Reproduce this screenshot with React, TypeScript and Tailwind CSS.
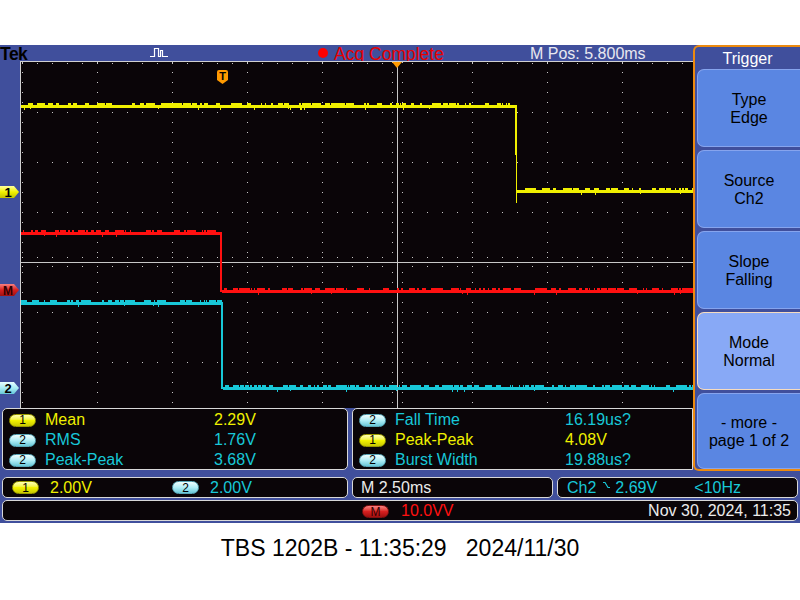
import React from 'react';

const YEL = '#f0f000';
const CYA = '#18c8d8';
const RED = '#ff1010';

// small deterministic noise so the traces look like a real capture
const makeRng = (seed: number) => () => {
  seed = (seed * 1103515245 + 12345) & 0x7fffffff;
  return seed / 0x7fffffff;
};

const Trace = ({ x0, x1, y, color, seed }: { x0: number; x1: number; y: number; color: string; seed: number }) => {
  const r = makeRng(seed);
  const bits: React.ReactNode[] = [<rect key="m" x={x0} y={y - 1} width={x1 - x0} height={3} fill={color} />];
  for (let x = x0; x < x1; x++) {
    const v = r();
    if (v < 0.22) {
      const w = 1 + Math.floor(r() * 5);
      bits.push(<rect key={'a' + x} x={x} y={y - 3} width={w} height={2} fill={color} />);
    } else if (v > 0.975) {
      bits.push(<rect key={'b' + x} x={x} y={y + 2} width={1} height={1 + Math.floor(r() * 2)} fill={color} />);
    }
  }
  return <g>{bits}</g>;
};

const Badge = ({ n, kind }: { n: string; kind: 'y' | 'c' | 'r' }) => {
  const cls = {
    y: 'bg-linear-to-b from-[#ffffb0] via-[#f2f200] to-[#c8c800] border-[#9a9a00] text-black',
    c: 'bg-linear-to-b from-[#f0feff] via-[#b0eef6] to-[#68c8d8] border-[#5aa8b8] text-black',
    r: 'bg-linear-to-b from-[#f88080] via-[#d82020] to-[#a01010] border-[#801010] text-[#300000]',
  }[kind];
  return (
    <span className={`inline-flex items-center justify-center w-[27px] h-[13px] rounded-full border text-[12px] leading-none shrink-0 ${cls}`}>
      {n}
    </span>
  );
};

const Graticule = () => {
  const dots: React.ReactNode[] = [];
  const cols = [22, 97, 172, 247, 322, 472, 547, 622];
  cols.forEach(cx => {
    for (let y = 62; y < 408; y += 10) dots.push(<rect key={`c${cx}-${y}`} x={cx} y={y} width={1} height={1} fill="#c8c8c8" />);
  });
  const rows = [63, 112, 162, 212, 312, 362];
  rows.forEach(ry => {
    for (let x = 22; x < 693; x += 15) dots.push(<rect key={`r${ry}-${x}`} x={x} y={ry} width={1} height={1} fill="#c8c8c8" />);
  });
  for (let x = 22; x < 693; x += 15) {
    dots.push(<rect key={`h1${x}`} x={x} y={257} width={1} height={1} fill="#c8c8c8" />);
    dots.push(<rect key={`h2${x}`} x={x} y={266} width={1} height={1} fill="#c8c8c8" />);
  }
  for (let y = 62; y < 408; y += 10) {
    dots.push(<rect key={`v1${y}`} x={392} y={y} width={1} height={1} fill="#c8c8c8" />);
    dots.push(<rect key={`v2${y}`} x={402} y={y} width={1} height={1} fill="#c8c8c8" />);
  }

  return (
    <svg width={693} height={347} viewBox="0 61 693 347" className="block">
      <rect x={0} y={61} width={20} height={347} fill="#404f9c" />
      <rect x={20} y={61} width={673} height={347} fill="#0a0508" />
      {dots}
      <rect x={20} y={61} width={1} height={347} fill="#d0d0d0" />
      <rect x={20} y={61} width={673} height={1} fill="#d0d0d0" />
      <rect x={397} y={61} width={1} height={347} fill="#c8c8c8" />
      <rect x={20} y={262} width={673} height={1} fill="#c8c8c8" />

      {/* yellow ch1 */}
      <Trace x0={21} x1={516} y={106} color={YEL} seed={7} />
      <rect x={515} y={105} width={2} height={50} fill={YEL} />
      <rect x={516} y={105} width={1} height={98} fill={YEL} />
      <Trace x0={517} x1={693} y={191} color={YEL} seed={11} />

      {/* red math */}
      <Trace x0={21} x1={222} y={233} color={RED} seed={23} />
      <rect x={220} y={232} width={2} height={60} fill={RED} />
      <Trace x0={222} x1={693} y={291} color={RED} seed={31} />

      {/* cyan ch2 */}
      <Trace x0={21} x1={222} y={303} color={CYA} seed={41} />
      <rect x={221} y={302} width={2} height={87} fill={CYA} />
      <Trace x0={223} x1={693} y={388} color={CYA} seed={53} />

      {/* trigger position */}
      <polygon points="392,62 402,62 397,68" fill="#ff9a00" />
      <path d="M217,72 Q217,70 219,70 H226 Q228,70 228,72 V80 L222.5,84 L217,80 Z" fill="#ff9a00" />
      <text x={222.5} y={80} fontSize={11} fontWeight={700} textAnchor="middle" fill="#000" fontFamily="Liberation Sans, Arial, sans-serif">T</text>

      {/* ground markers */}
      <defs>
        <linearGradient id="gy" x1="0" y1="0" x2="0" y2="1">
          <stop offset="0" stopColor="#ffffa0" />
          <stop offset="0.5" stopColor="#f2f200" />
          <stop offset="1" stopColor="#c0c000" />
        </linearGradient>
        <linearGradient id="gr" x1="0" y1="0" x2="0" y2="1">
          <stop offset="0" stopColor="#f88080" />
          <stop offset="0.5" stopColor="#d82020" />
          <stop offset="1" stopColor="#a01010" />
        </linearGradient>
        <linearGradient id="gc" x1="0" y1="0" x2="0" y2="1">
          <stop offset="0" stopColor="#e8fdff" />
          <stop offset="0.5" stopColor="#a8ecf4" />
          <stop offset="1" stopColor="#68c8d8" />
        </linearGradient>
      </defs>
      {[
        { y: 192, f: 'url(#gy)', t: '1', tc: '#000' },
        { y: 290, f: 'url(#gr)', t: 'M', tc: '#300000' },
        { y: 388, f: 'url(#gc)', t: '2', tc: '#000' },
      ].map(m => (
        <g key={m.t}>
          <polygon points={`0,${m.y - 6} 14,${m.y - 6} 19,${m.y} 14,${m.y + 6} 0,${m.y + 6}`} fill={m.f} />
          <text x={8} y={m.y + 5} fontSize={m.t === 'M' ? 12 : 13} fontWeight={700} textAnchor="middle" fill={m.tc} fontFamily="Liberation Sans, Arial, sans-serif">{m.t}</text>
        </g>
      ))}
    </svg>
  );
};

const MeasRow = ({ n, kind, label, value, color, labelW }: { n: string; kind: 'y' | 'c'; label: string; value: string; color: string; labelW: string }) => (
  <div className="flex items-center h-[20px]">
    <Badge n={n} kind={kind} />
    <span className={`ml-[9px] ${labelW} ${color}`}>{label}</span>
    <span className={color}>{value}</span>
  </div>
);

const MenuButton = ({ l1, l2, active, grow }: { l1: string; l2: string; active?: boolean; grow?: boolean }) => (
  <div
    className={`ml-[2px] flex flex-col items-center justify-center rounded-l-[7px] border-y border-l text-black text-[16px] leading-[18px] pt-[2px] ${
      grow ? 'flex-1' : 'h-[78px]'
    } ${active ? 'bg-[#88a9f6] border-[#f6dcc0]' : 'bg-[#5a86e2] border-[#86a4ee]'}`}
  >
    <span>{l1}</span>
    <span>{l2}</span>
  </div>
);

const App: React.FC = () => {
  return (
    <div className="w-[800px] h-[600px] bg-white font-['Liberation_Sans',Arial,sans-serif] overflow-hidden">
      <div className="h-[45px]" />
      <div className="h-[478px] bg-[#404f9c] flex flex-col">
        <div className="flex h-[426px]">
          {/* display column */}
          <div className="w-[693px] flex flex-col">
            <div className="h-[16px] flex items-center text-[16px] leading-[16px] pt-[2px]">
              <span className="w-[150px] text-[17.5px] font-bold tracking-[-0.5px] text-black">Tek</span>
              <svg width={168} height={16} viewBox="150 45 168 16" className="block shrink-0 -mt-[2px]">
                <path d="M150 56.5 H154.5 V48.5 H158.5 V56.5 H160.5 V50.5 H162.5 V56.5 H168" stroke="#fff" fill="none" strokeWidth={1.2} />
              </svg>
              <span className="w-[10px] h-[10px] shrink-0 rounded-full bg-[#ff0000] -mt-[3px]" />
              <span className="ml-[6px] w-[196px] shrink-0 text-[17.5px] text-[#e80000]">Acq Complete</span>
              <span className="text-[#e8e8f0]">M Pos: 5.800ms</span>
            </div>
            <Graticule />
            <div className="flex gap-[4px] pl-[2px] h-[63px] text-[16px] leading-[20px]">
              <div className="w-[346px] h-[62px] bg-[#0a0508] border border-[#d8d8d8] rounded-[5px] pl-[6px] pt-[1px]">
                <MeasRow n="1" kind="y" label="Mean" value="2.29V" color="text-[#f0f000]" labelW="w-[169px]" />
                <MeasRow n="2" kind="c" label="RMS" value="1.76V" color="text-[#18c8d8]" labelW="w-[169px]" />
                <MeasRow n="2" kind="c" label="Peak-Peak" value="3.68V" color="text-[#18c8d8]" labelW="w-[169px]" />
              </div>
              <div className="flex-1 h-[62px] bg-[#0a0508] border border-[#d8d8d8] rounded-l-[5px] pl-[6px] pt-[1px]">
                <MeasRow n="2" kind="c" label="Fall Time" value="16.19us?" color="text-[#18c8d8]" labelW="w-[170px]" />
                <MeasRow n="1" kind="y" label="Peak-Peak" value="4.08V" color="text-[#f0f000]" labelW="w-[170px]" />
                <MeasRow n="2" kind="c" label="Burst Width" value="19.88us?" color="text-[#18c8d8]" labelW="w-[170px]" />
              </div>
            </div>
          </div>

          {/* side menu */}
          <div className="flex-1 flex flex-col border-2 border-r-0 border-[#ec8a10] rounded-l-[6px]">
            <div className="h-[22px] flex items-center justify-center text-[16px] text-white pt-[2px]">Trigger</div>
            <div className="flex-1 flex flex-col gap-[3px]">
              <MenuButton l1="Type" l2="Edge" />
              <MenuButton l1="Source" l2="Ch2" />
              <MenuButton l1="Slope" l2="Falling" />
              <MenuButton l1="Mode" l2="Normal" active />
              <MenuButton l1="- more -" l2="page 1 of 2" grow />
            </div>
          </div>
        </div>

        {/* status rows */}
        <div className="mt-[6px] h-[21px] flex gap-[4px] px-[2px] text-[16px]">
          <div className="w-[346px] flex items-center bg-[#0a0508] border border-[#d8d8d8] rounded-[5px] pl-[9px]">
            <Badge n="1" kind="y" />
            <span className="ml-[11px] w-[122px] text-[#f0f000]">2.00V</span>
            <Badge n="2" kind="c" />
            <span className="ml-[11px] text-[#18c8d8]">2.00V</span>
          </div>
          <div className="w-[201px] flex items-center bg-[#0a0508] border border-[#d8d8d8] rounded-[5px] pl-[8px] text-[#ececec]">
            M 2.50ms
          </div>
          <div className="flex-1 flex items-center bg-[#0a0508] border border-[#d8d8d8] rounded-[5px] pl-[9px] text-[#18c8d8]">
            <span>Ch2</span>
            <svg width={8} height={8} viewBox="0 0 8 8" className="ml-[7px] mt-[-6px]">
              <polyline points="0,1.5 2,1.5 5,6.5 7,6.5" stroke="#18c8d8" fill="none" strokeWidth={1.2} />
            </svg>
            <span className="ml-[4px] w-[79px]">2.69V</span>
            <span>&lt;10Hz</span>
          </div>
        </div>
        <div className="mt-[2px] mx-[2px] h-[21px] flex items-center bg-[#0a0508] border border-[#d8d8d8] rounded-[5px] text-[16px]">
          <span className="ml-[359px]">
            <Badge n="M" kind="r" />
          </span>
          <span className="ml-[12px] text-[#ff1010]">10.0VV</span>
          <span className="ml-auto mr-[6px] text-[#ececec]">Nov 30, 2024, 11:35</span>
        </div>
      </div>
      <div className="h-[50px] flex items-center justify-center text-[23px] text-black whitespace-pre">
        TBS 1202B - 11:35:29   2024/11/30
      </div>
    </div>
  );
};

export default App;
